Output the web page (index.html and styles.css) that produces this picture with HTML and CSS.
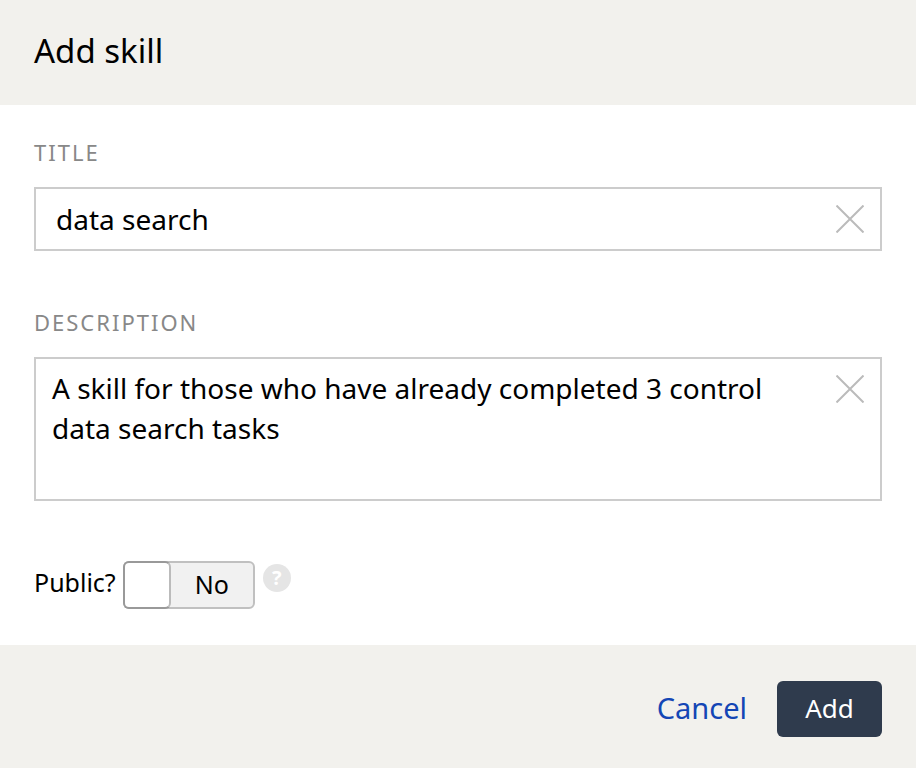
FILE: index.html
```html
<!DOCTYPE html>
<html lang="en">
<head>
<meta charset="utf-8">
<meta name="viewport" content="width=device-width, initial-scale=1">
<title>Add skill</title>
<link rel="stylesheet" href="styles.css">
</head>
<body>
<form class="dialog">
  <header class="dialog-header"><h1>Add skill</h1></header>
  <main class="dialog-body">
    <div class="field">
      <label for="title">Title</label>
      <div class="control">
        <input id="title" class="text-input" type="text" value="data search">
        <button class="clear" type="button" aria-label="Clear title"><svg viewBox="0 0 28 28"><path d="M0.5 0.5L27.5 27.5M27.5 0.5L0.5 27.5"/></svg></button>
      </div>
    </div>
    <div class="field">
      <label for="description">Description</label>
      <div class="control">
        <textarea id="description" class="text-area">A skill for those who have already completed 3 control data search tasks</textarea>
        <button class="clear" type="button" aria-label="Clear description"><svg viewBox="0 0 28 28"><path d="M0.5 0.5L27.5 27.5M27.5 0.5L0.5 27.5"/></svg></button>
      </div>
    </div>
    <div class="public-row">
      <label for="public">Public?</label>
      <label class="switch" for="public">
        <input id="public" type="checkbox" role="switch">
        <span class="knob"></span>
        <span class="switch-text">No</span>
      </label>
      <button class="help" type="button" aria-label="Help">?</button>
    </div>
  </main>
  <footer class="dialog-footer">
    <button class="cancel" type="button">Cancel</button>
    <button class="add" type="submit">Add</button>
  </footer>
</form>
</body>
</html>
```

FILE: styles.css
```css
* { box-sizing: border-box; }
body { margin: 0; background: #fff; color: #000; font-family: "Noto Sans", sans-serif; }
button, input, textarea { font-family: inherit; }
button { padding: 0; border: 0; background: none; cursor: pointer; }
.dialog { display: flex; flex-direction: column; min-height: 100vh; }
.dialog-header { padding: 27px 34px 30px; background: #f2f1ed; }
h1 { margin: 0; font-size: 33px; font-weight: 400; line-height: 48px; }
.dialog-body { flex: 1; padding: 35px 34px 36px; }
.field { margin-bottom: 59px; }
.field:last-of-type { margin-bottom: 60px; }
.field label { display: block; margin-bottom: 23px; color: #888; font-size: 22px; line-height: 24px; letter-spacing: 2px; text-transform: uppercase; }
.control { position: relative; }
.text-input, .text-area { display: block; width: 100%; border: 2px solid #ccc; border-radius: 0; outline: 0; background: #fff; color: #000; font-size: 28px; }
.text-input { height: 64px; padding: 0 64px 0 20px; }
.text-area { height: 144px; padding: 9px 80px 9px 16px; line-height: 40px; resize: none; overflow: hidden; }
.clear { position: absolute; top: 18px; right: 18px; width: 28px; height: 28px; }
.clear svg { display: block; width: 28px; height: 28px; fill: none; stroke: #bbb; stroke-width: 2; }
.public-row { display: flex; align-items: flex-start; padding-top: 1px; font-size: 25px; line-height: 42px; }
.switch { position: relative; display: flex; width: 132px; height: 48px; margin-left: 7px; border: 2px solid #c0c0c0; border-radius: 6px; background: #f1f1f1; cursor: pointer; }
.switch input { position: absolute; inset: 0; margin: 0; opacity: 0; }
.knob { flex: none; width: 48px; height: 48px; margin: -2px 0 0 -2px; border: 2px solid #999; border-right-color: #bbb; border-radius: 6px; background: #fff; }
.switch-text { flex: 1; text-align: center; }
.help { width: 28px; height: 28px; margin: 3px 0 0 8px; border-radius: 50%; background: #e5e5e5; color: #fff; font-size: 20px; font-weight: 700; line-height: 28px; }
.dialog-footer { display: flex; justify-content: flex-end; align-items: center; gap: 30px; padding: 36px 34px 31px; background: #f2f1ed; }
.cancel { padding-bottom: 4px; color: #1446b5; font-size: 29px; }
.add { width: 105px; height: 56px; padding-bottom: 2px; border-radius: 6px; background: #2f3b4d; color: #fff; font-size: 26px; }
```
